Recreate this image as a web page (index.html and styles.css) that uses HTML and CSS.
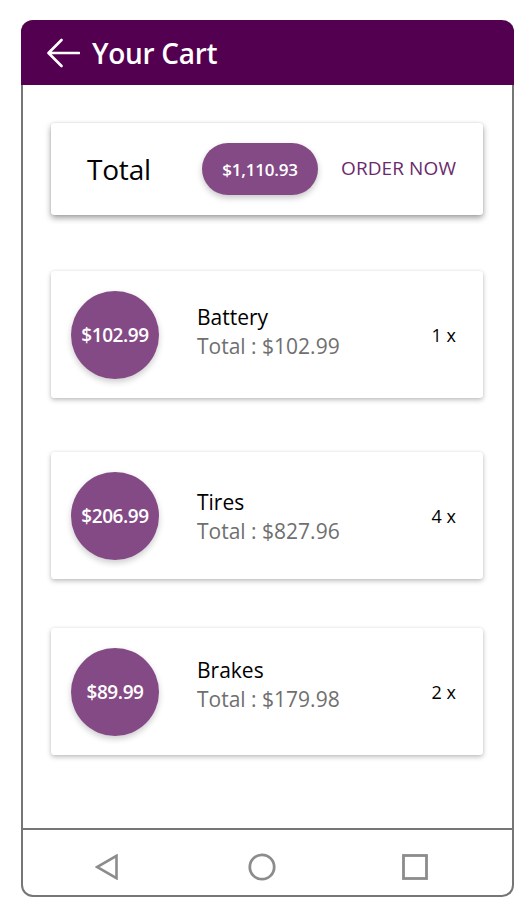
FILE: index.html
```html
<!DOCTYPE html>
<html lang="en">
<head>
<meta charset="utf-8">
<title>Your Cart</title>
<link rel="stylesheet" href="styles.css">
</head>
<body>
<div class="phone">
  <header class="app-bar">
    <svg class="back" width="34" height="30" viewBox="0 0 34 30" aria-hidden="true">
      <path d="M33 15 H3 M15.5 2 L2.5 15 L15.5 28" fill="none" stroke="#fff" stroke-width="2.6" stroke-linecap="round" stroke-linejoin="round"/>
    </svg>
    <h1 class="title">Your Cart</h1>
  </header>

  <main class="content">
    <section class="total-card">
      <span class="total-label">Total</span>
      <span class="pill">$1,110.93</span>
      <span class="order">ORDER NOW</span>
    </section>

    <ul class="items">
      <li class="item">
        <div class="price">$102.99</div>
        <div class="info">
          <div class="name">Battery</div>
          <div class="sub">Total : $102.99</div>
        </div>
        <div class="qty">1 x</div>
      </li>
      <li class="item item-low">
        <div class="price">$206.99</div>
        <div class="info">
          <div class="name">Tires</div>
          <div class="sub">Total : $827.96</div>
        </div>
        <div class="qty">4 x</div>
      </li>
      <li class="item item-high">
        <div class="price">$89.99</div>
        <div class="info">
          <div class="name">Brakes</div>
          <div class="sub">Total : $179.98</div>
        </div>
        <div class="qty">2 x</div>
      </li>
    </ul>
  </main>

  <nav class="sys-nav">
    <svg width="24" height="26" viewBox="0 0 24 26" aria-hidden="true">
      <path d="M21.5 1.8 V24.2 L2 13 Z" fill="none" stroke="#8c8c8c" stroke-width="2.6" stroke-linejoin="miter"/>
    </svg>
    <svg class="home" width="28" height="28" viewBox="0 0 28 28" aria-hidden="true">
      <circle cx="14" cy="14" r="12.2" fill="none" stroke="#8c8c8c" stroke-width="2.8"/>
    </svg>
    <svg width="26" height="26" viewBox="0 0 26 26" aria-hidden="true">
      <rect x="1.5" y="1.5" width="23" height="23" fill="none" stroke="#8c8c8c" stroke-width="2.8"/>
    </svg>
  </nav>
</div>
</body>
</html>
```

FILE: styles.css
```css
* { box-sizing: border-box; }

html, body {
  margin: 0;
  padding: 0;
  background: #ffffff;
}

body {
  font-family: "Open Sans", "Noto Sans", "DejaVu Sans", sans-serif;
  color: #000;
}

.phone {
  margin: 20px 0 0 21px;
  width: 493px;
  height: 877px;
  border: 2px solid #767676;
  border-top: 0;
  border-radius: 12px;
  display: flex;
  flex-direction: column;
  background: #fff;
}

.app-bar {
  margin: 0 -2px;
  height: 65px;
  background: #540050;
  border-radius: 12px 12px 0 0;
  display: flex;
  align-items: center;
  padding-left: 25px;
  gap: 12px;
}

.back { display: block; flex: none; }

.title {
  margin: 0;
  color: #fff;
  font-size: 28px;
  font-weight: 600;
  letter-spacing: -0.3px;
  line-height: 1;
  padding-top: 1px;
}

.content {
  flex: 1;
  padding: 38px 29px 0 28px;
}

.total-card {
  height: 92px;
  background: #fff;
  border-radius: 3px;
  box-shadow: 0 3px 6px rgba(0, 0, 0, 0.38), 0 0 2px rgba(0, 0, 0, 0.12);
  display: flex;
  align-items: center;
  padding-left: 36px;
}

.total-label {
  width: 115px;
  font-size: 28px;
  color: #000;
  letter-spacing: -0.2px;
}

.pill {
  width: 116px;
  height: 52px;
  border-radius: 26px;
  background: #844a86;
  color: #fff;
  font-size: 17px;
  font-weight: 600;
  letter-spacing: -0.2px;
  display: flex;
  align-items: center;
  justify-content: center;
  box-shadow: 0 3px 6px rgba(0, 0, 0, 0.22);
}

.order {
  margin-left: 23px;
  color: #6b2a6d;
  font-size: 19px;
  letter-spacing: 0.1px;
  padding-bottom: 2px;
}

.items {
  list-style: none;
  margin: 56px 0 0;
  padding: 0;
  display: flex;
  flex-direction: column;
}

.item {
  height: 127px;
  background: #fff;
  border-radius: 3px;
  box-shadow: 0 2px 5px rgba(0, 0, 0, 0.25), 0 0 2px rgba(0, 0, 0, 0.08);
  display: flex;
  align-items: center;
  padding: 0 27px 0 20px;
}

.item-low { margin-top: 54px; }
.item-high { margin-top: 49px; }

.price {
  width: 88px;
  height: 88px;
  flex: none;
  border-radius: 50%;
  background: #844a86;
  color: #fff;
  font-size: 19px;
  font-weight: 600;
  letter-spacing: -0.4px;
  display: flex;
  align-items: center;
  justify-content: center;
  box-shadow: 0 3px 6px rgba(0, 0, 0, 0.2);
}

.info {
  margin-left: 38px;
  flex: 1;
  display: flex;
  flex-direction: column;
  padding-bottom: 5px;
}

.item-low .info { padding: 3px 0 0; }
.item-high .info { padding: 0 0 14px; }

.name {
  font-size: 21px;
  line-height: 29px;
  color: #000;
}

.sub {
  font-size: 21px;
  line-height: 29px;
  color: #6f6f6f;
}

.qty {
  font-size: 18px;
  color: #000;
}

.sys-nav {
  height: 67px;
  border-top: 2px solid #767676;
  display: flex;
  align-items: center;
  padding: 8px 0 0 72px;
}

.sys-nav svg { display: block; }
.sys-nav .home { margin: 0 126px 0 129px; }
```
